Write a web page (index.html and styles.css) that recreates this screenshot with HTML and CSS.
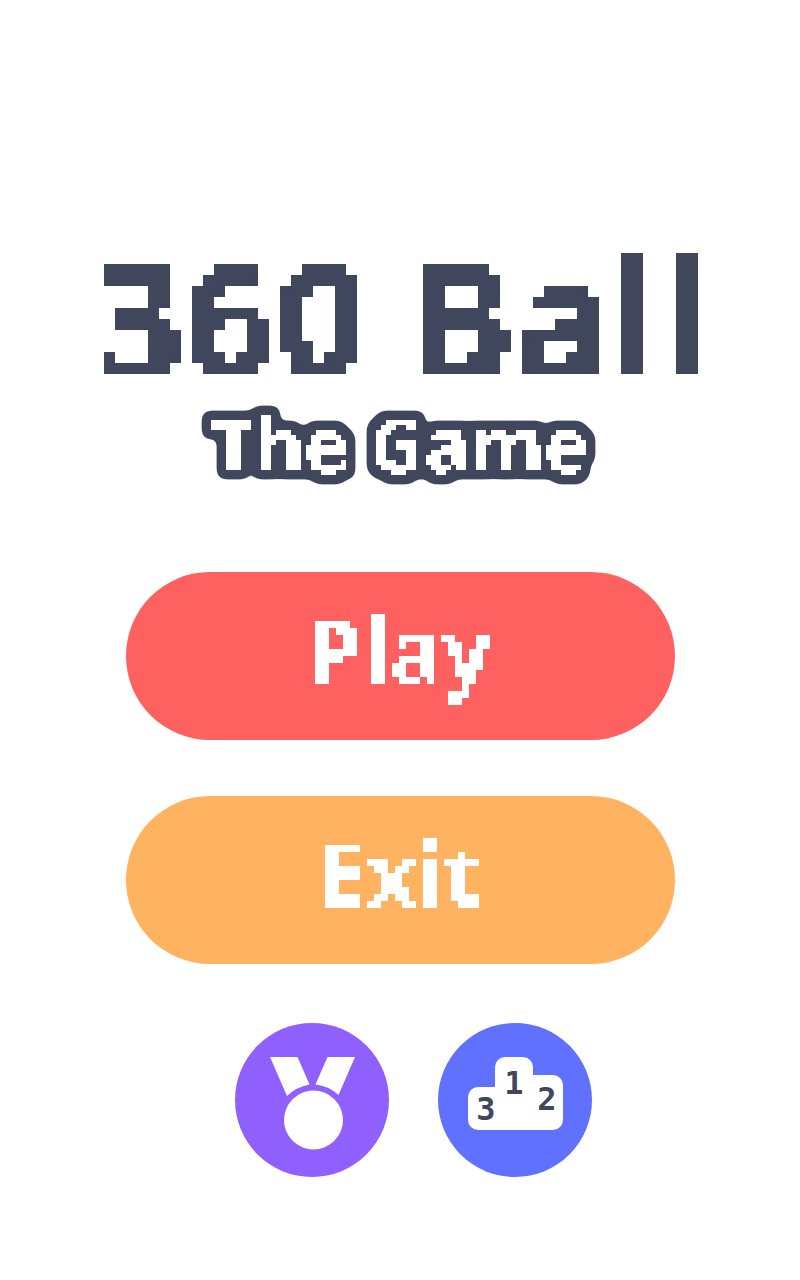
FILE: index.html
```html
<!DOCTYPE html>
<html lang="en">
<head>
<meta charset="utf-8">
<meta name="viewport" content="width=device-width, initial-scale=1">
<title>360 Ball</title>
<link rel="stylesheet" href="styles.css">
</head>
<body>
<svg class="filters" width="0" height="0" aria-hidden="true">
  <!-- Each filter samples the text on a grid and grows every sample into a block. -->
  <filter id="blocks-large" x="-5%" y="-5%" width="110%" height="110%" color-interpolation-filters="sRGB">
    <feFlood x="5" y="5" width="1" height="1"/>
    <feComposite x="0" y="0" width="11" height="11"/>
    <feTile result="grid"/>
    <feComposite in="SourceGraphic" in2="grid" operator="in"/>
    <feComponentTransfer><feFuncA type="discrete" tableValues="0 1"/></feComponentTransfer>
    <feMorphology operator="dilate" radius="5"/>
  </filter>
  <filter id="blocks-medium" x="-5%" y="-5%" width="110%" height="110%" color-interpolation-filters="sRGB">
    <feFlood x="3" y="3" width="1" height="1"/>
    <feComposite x="0" y="0" width="7" height="7"/>
    <feTile result="grid"/>
    <feComposite in="SourceGraphic" in2="grid" operator="in"/>
    <feComponentTransfer><feFuncA type="discrete" tableValues="0 1"/></feComponentTransfer>
    <feMorphology operator="dilate" radius="3"/>
  </filter>
  <filter id="blocks-outline" x="-5%" y="-20%" width="110%" height="140%" color-interpolation-filters="sRGB">
    <feFlood x="2" y="2" width="1" height="1"/>
    <feComposite x="0" y="0" width="5" height="5"/>
    <feTile result="grid"/>
    <feComposite in="SourceGraphic" in2="grid" operator="in"/>
    <feComponentTransfer><feFuncA type="discrete" tableValues="0 1"/></feComponentTransfer>
    <feMorphology operator="dilate" radius="2" result="letters"/>
    <feMorphology in="letters" operator="dilate" radius="7"/>
    <feGaussianBlur stdDeviation="4"/>
    <feComponentTransfer result="edge"><feFuncA type="linear" slope="12" intercept="-3"/></feComponentTransfer>
    <feFlood flood-color="#40465c"/>
    <feComposite in2="edge" operator="in" result="outline"/>
    <feMerge><feMergeNode in="outline"/><feMergeNode in="letters"/></feMerge>
  </filter>
</svg>
<main class="menu">
  <header class="heading">
    <h1 class="title">360 Ball</h1>
    <p class="subtitle">The Game</p>
  </header>
  <nav class="actions" aria-label="Main menu">
    <button class="pill play" type="button"><span class="label">Play</span></button>
    <button class="pill exit" type="button"><span class="label">Exit</span></button>
  </nav>
  <div class="rounds">
    <button class="round awards" type="button" aria-label="Achievements">
      <svg class="icon" viewBox="0 0 154 154" aria-hidden="true">
        <path fill="#fff" d="M35 34H62.500L74.500 61.500Q61 64 52 73ZM92.500 34H120L103.500 72Q94 63 80.500 61.500Z"/>
        <circle cx="78.500" cy="97" r="29.500" fill="#fff"/>
      </svg>
    </button>
    <button class="round ranks" type="button" aria-label="Leaderboard">
      <svg class="icon" viewBox="0 0 154 154" aria-hidden="true">
        <path fill="#fff" d="M30 74A10 10 0 0 1 40 64H57V44A10 10 0 0 1 67 34H85A10 10 0 0 1 95 44V52H115A10 10 0 0 1 125 62V97A10 10 0 0 1 115 107H40A10 10 0 0 1 30 97Z"/>
        <text class="rank" x="48" y="97">3</text>
        <text class="rank" x="76" y="71">1</text>
        <text class="rank" x="109" y="87">2</text>
      </svg>
    </button>
  </div>
</main>
</body>
</html>
```
FILE: styles.css
```css
* {
  box-sizing: border-box;
}

body {
  margin: 0;
  background: #fff;
  font-family: "Noto Sans", "Open Sans", sans-serif;
  font-weight: 700;
}

.filters {
  position: absolute;
}

.menu {
  display: flex;
  flex-direction: column;
  align-items: center;
  min-height: 100vh;
  padding: 231px 16px 0;
}

.heading {
  display: flex;
  flex-direction: column;
  align-items: center;
  margin-bottom: 81px;
}

.title {
  margin: 0;
  color: #40465c;
  font-size: 160px;
  line-height: 168px;
  white-space: nowrap;
  filter: url(#blocks-large);
}

.subtitle {
  margin: -4px 0 0;
  color: #fff;
  font-size: 76px;
  line-height: 96px;
  white-space: nowrap;
  filter: url(#blocks-outline);
}

.actions {
  display: flex;
  flex-direction: column;
  gap: 56px;
  width: 100%;
  max-width: 549px;
}

.pill,
.round {
  padding: 0;
  border: 0;
  color: #fff;
  font: inherit;
  cursor: pointer;
}

.pill {
  height: 168px;
  padding-bottom: 14px;
  border-radius: 84px;
  font-size: 88px;
  line-height: 112px;
}

.label {
  display: inline-block;
  filter: url(#blocks-medium);
}

.play {
  background: #ff6060;
}

.exit {
  background: #ffb260;
}

.rounds {
  display: flex;
  gap: 49px;
  margin-top: 59px;
  padding-left: 27px;
}

.round {
  width: 154px;
  height: 154px;
  border-radius: 50%;
}

.awards {
  background: #9060ff;
}

.ranks {
  background: #6070ff;
}

.icon {
  display: block;
}

.rank {
  fill: #40465c;
  font-family: "DejaVu Sans Mono", monospace;
  font-size: 32px;
  text-anchor: middle;
}
```
